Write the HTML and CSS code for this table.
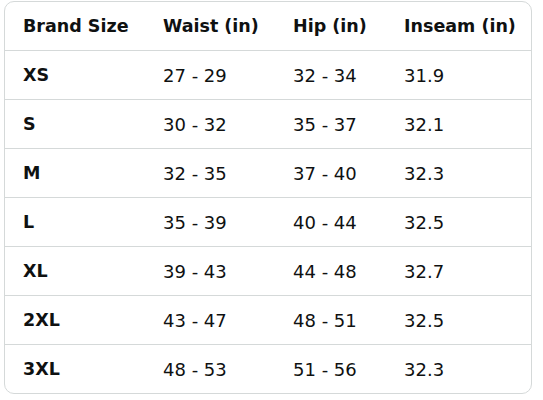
FILE: index.html
```html
<!DOCTYPE html>
<html>
<head>
<meta charset="utf-8">
<link rel="stylesheet" href="styles.css">
</head>
<body>
<div class="card">
<table class="sizes">
<colgroup><col class="c1"><col class="c2"><col class="c3"><col class="c4"></colgroup>
<thead>
<tr><th>Brand Size</th><th>Waist (in)</th><th>Hip (in)</th><th>Inseam (in)</th></tr>
</thead>
<tbody>
<tr><th>XS</th><td>27 - 29</td><td>32 - 34</td><td>31.9</td></tr>
<tr><th>S</th><td>30 - 32</td><td>35 - 37</td><td>32.1</td></tr>
<tr><th>M</th><td>32 - 35</td><td>37 - 40</td><td>32.3</td></tr>
<tr><th>L</th><td>35 - 39</td><td>40 - 44</td><td>32.5</td></tr>
<tr><th>XL</th><td>39 - 43</td><td>44 - 48</td><td>32.7</td></tr>
<tr><th>2XL</th><td>43 - 47</td><td>48 - 51</td><td>32.5</td></tr>
<tr><th>3XL</th><td>48 - 53</td><td>51 - 56</td><td>32.3</td></tr>
</tbody>
</table>
</div>
</body>
</html>
```
FILE: styles.css
```css
html, body { margin: 0; padding: 0; background: #fff; }
body { padding: 1px 11px 0 4px; }
.card {
  width: 526px;
  border: 1px solid #d5d9d9;
  border-radius: 10px;
  overflow: hidden;
}
.sizes {
  width: 100%;
  border-collapse: collapse;
  table-layout: fixed;
  font-family: "DejaVu Sans", sans-serif;
  font-size: 18px;
  color: #0f1111;
}
.c1 { width: 140px; }
.c2 { width: 130px; }
.c3 { width: 111px; }
.c4 { width: 145px; }
.sizes th, .sizes td {
  height: 48px;
  padding: 0 0 0 18px;
  text-align: left;
  vertical-align: middle;
  border-bottom: 1px solid #d5d9d9;
  white-space: nowrap;
}
.sizes th { font-weight: 700; font-size: 17.5px; }
.sizes td { font-weight: 400; }
.sizes tbody tr:last-child th, .sizes tbody tr:last-child td { border-bottom: none; }
```
